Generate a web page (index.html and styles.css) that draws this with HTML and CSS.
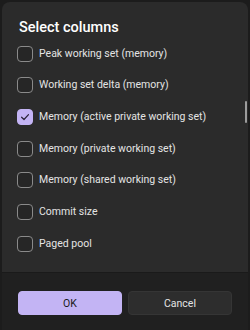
FILE: index.html
```html
<!DOCTYPE html>
<html>
<head>
<meta charset="utf-8">
<link rel="stylesheet" href="styles.css">
</head>
<body>
<div class="dialog">
  <div class="content">
    <div class="title">Select columns</div>
    <div class="list">
      <div class="row"><span class="box"></span><span class="label">Peak working set (memory)</span></div>
      <div class="row"><span class="box"></span><span class="label">Working set delta (memory)</span></div>
      <div class="row"><span class="box checked"><svg viewBox="0 0 16 16" width="16" height="16"><path d="M4.6 8.2 L7 10.5 L11.5 5.6" fill="none" stroke="#2a2438" stroke-width="1.2" stroke-linecap="round" stroke-linejoin="round"/></svg></span><span class="label">Memory (active private working set)</span></div>
      <div class="row"><span class="box"></span><span class="label">Memory (private working set)</span></div>
      <div class="row"><span class="box"></span><span class="label">Memory (shared working set)</span></div>
      <div class="row"><span class="box"></span><span class="label">Commit size</span></div>
      <div class="row"><span class="box"></span><span class="label">Paged pool</span></div>
    </div>
  </div>
  <div class="footer">
    <button class="btn primary">OK</button>
    <button class="btn">Cancel</button>
  </div>
  <div class="scrollbar"></div>
</div>
</body>
</html>
```
FILE: styles.css
```css
html, body {
  margin: 0;
  padding: 0;
  background: #1c1c1c;
  overflow: hidden;
}
body {
  width: 250px;
  height: 330px;
  font-family: Roboto, "Noto Sans", sans-serif;
  color: #e8e8e8;
}
.dialog {
  position: relative;
  margin: 2px 2px 0 2px;
  height: 328px;
  background: #2b2b2b;
  border-radius: 8px 8px 0 0;
  display: flex;
  flex-direction: column;
  overflow: hidden;
}
.content {
  flex: 1;
  padding: 16px 0 0 15px;
}
.title {
  font-size: 14.5px;
  font-weight: 500;
  line-height: 20px;
  height: 20px;
  color: #ffffff;
  padding-left: 2px;
}
.list {
  display: flex;
  flex-direction: column;
}
.row {
  height: 31.67px;
  display: flex;
  align-items: center;
  gap: 6px;
}
.box {
  box-sizing: border-box;
  width: 16px;
  height: 16px;
  border: 1px solid #8a8a8a;
  border-radius: 4px;
  background: #262626;
  flex: none;
  display: flex;
}
.box.checked {
  background: #c3b4f4;
  border-color: #c3b4f4;
}
.box.checked svg {
  margin: -1px;
}
.label {
  font-size: 10.5px;
  line-height: 16px;
  white-space: nowrap;
  color: #e4e4e4;
}
.footer {
  height: 58px;
  box-sizing: border-box;
  background: #202020;
  border-top: 1px solid #1a1a1a;
  padding: 18px 16px 0 16px;
  display: grid;
  grid-template-columns: 1fr 1fr;
  gap: 6px;
  align-items: start;
}
.btn {
  height: 24px;
  border-radius: 4px;
  font-family: Roboto, "Noto Sans", sans-serif;
  font-size: 10.5px;
  color: #e4e4e4;
  background: #2d2d2d;
  border: 1px solid #353535;
  padding: 0;
}
.btn.primary {
  background: #c3b4f4;
  border-color: #c3b4f4;
  color: #1a1a1a;
}
.scrollbar {
  position: absolute;
  right: 1px;
  top: 99px;
  width: 2px;
  height: 22px;
  border-radius: 1px;
  background: #9c9c9c;
}
```
